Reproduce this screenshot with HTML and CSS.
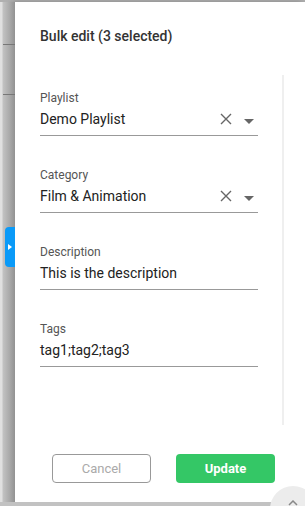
FILE: index.html
```html
<!DOCTYPE html>
<html lang="en">
<head>
    <meta charset="UTF-8">
    <meta name="viewport" content="width=device-width, initial-scale=1.0">
    <title>Bulk edit</title>
    <link rel="stylesheet" href="styles.css">
</head>
<body>
    <div class="screen">
        <div class="page">
            <div class="backdrop">
                <div class="row-line"></div>
                <div class="row-line"></div>
                <div class="side-tab"></div>
            </div>

            <div class="panel">
                <div class="panel-header">
                    <h2>Bulk edit (3 selected)</h2>
                </div>

                <div class="panel-body">
                    <div class="field">
                        <label>Playlist</label>
                        <div class="field-input">
                            <span class="value">Demo Playlist</span>
                            <svg class="clear" width="12" height="12" viewBox="0 0 12 12"><path d="M1 1L11 11M11 1L1 11" stroke="#666" stroke-width="1.4" fill="none"/></svg>
                            <svg class="caret" width="10" height="5" viewBox="0 0 10 5"><path d="M0 0H10L5 5Z" fill="#666"/></svg>
                        </div>
                    </div>
                    <div class="field">
                        <label>Category</label>
                        <div class="field-input">
                            <span class="value">Film &amp; Animation</span>
                            <svg class="clear" width="12" height="12" viewBox="0 0 12 12"><path d="M1 1L11 11M11 1L1 11" stroke="#666" stroke-width="1.4" fill="none"/></svg>
                            <svg class="caret" width="10" height="5" viewBox="0 0 10 5"><path d="M0 0H10L5 5Z" fill="#666"/></svg>
                        </div>
                    </div>
                    <div class="field">
                        <label>Description</label>
                        <div class="field-input">
                            <span class="value">This is the description</span>
                        </div>
                    </div>
                    <div class="field">
                        <label>Tags</label>
                        <div class="field-input">
                            <span class="value">tag1;tag2;tag3</span>
                        </div>
                    </div>
                </div>

                <div class="panel-footer">
                    <button class="btn btn-cancel">Cancel</button>
                    <button class="btn btn-update">Update</button>
                </div>
            </div>
        </div>
        <div class="bottom-bar"></div>
        <div class="scroll-top">
            <svg width="10" height="6" viewBox="0 0 10 6"><path d="M1 5L5 1L9 5" stroke="#888" stroke-width="1.5" fill="none"/></svg>
        </div>
    </div>
</body>
</html>
```

FILE: styles.css
```css
body {
    margin: 0;
    font-family: Roboto, "Liberation Sans", sans-serif;
    color: #222;
}

.screen {
    position: relative;
    height: 506px;
    padding-top: 2px;
    box-sizing: border-box;
    background-color: #b0b0b0;
    overflow: hidden;
}

.page {
    display: flex;
    height: 500px;
}

/* grey overlay strip left of the dialog */
.backdrop {
    width: 15px;
    flex-shrink: 0;
    position: relative;
    background: linear-gradient(to right, #e0e0e0 0, #e0e0e0 2px, #c2c2c2 3px, #acacac 9px, #929292 15px);
    padding-top: 42px;
}

.row-line {
    height: 1px;
    margin-left: 3px;
    margin-bottom: 49px;
    background-color: #777;
}

.side-tab {
    position: absolute;
    left: 5px;
    top: 225px;
    width: 10px;
    height: 40px;
    background-color: #0a9af8;
    border-radius: 4px 0 0 4px;
}

.side-tab::after {
    content: '';
    position: absolute;
    left: 3px;
    top: 17px;
    border-left: 4px solid #fff;
    border-top: 3px solid transparent;
    border-bottom: 3px solid transparent;
}

.panel {
    flex: 1;
    background-color: #fff;
    display: flex;
    flex-direction: column;
    box-shadow: -3px 0 6px rgba(0, 0, 0, 0.25);
}

.panel-header {
    height: 73px;
    padding: 24px 25px 0;
    box-sizing: border-box;
}

.panel-header h2 {
    margin: 0;
    font-size: 14px;
    line-height: 20px;
    font-weight: 500;
    color: #333;
}

.panel-body {
    height: 350px;
    margin-left: 25px;
    margin-right: 21px;
    padding: 16px 24px 0 0;
    box-sizing: border-box;
    border-right: 2px solid #efefef;
}

.field {
    margin-bottom: 32px;
}

.field label {
    display: block;
    font-size: 12px;
    line-height: 14px;
    color: #555;
    margin-bottom: 4px;
}

.field-input {
    display: flex;
    align-items: center;
    padding-bottom: 6px;
    border-bottom: 1px solid #999;
}

.value {
    flex: 1;
    font-size: 14px;
    line-height: 20px;
    color: #222;
}

.clear {
    margin-right: 12px;
}

.caret {
    margin-right: 4px;
    margin-top: 4px;
}

.panel-footer {
    display: flex;
    gap: 25px;
    padding: 29px 0 0 37px;
}

.btn {
    width: 99px;
    height: 29px;
    border-radius: 4px;
    font-family: Roboto, "Liberation Sans", sans-serif;
    font-size: 13px;
    cursor: pointer;
}

.btn-cancel {
    background-color: #fff;
    border: 1px solid #999;
    color: #aaa;
}

.btn-update {
    background-color: #34c766;
    border: none;
    color: #fff;
    font-weight: 700;
}

.bottom-bar {
    height: 4px;
    background-color: #c2c2c2;
    position: relative;
    z-index: 2;
}

.scroll-top {
    position: absolute;
    left: 270px;
    top: 486px;
    width: 46px;
    height: 46px;
    border-radius: 50%;
    background-color: #ececec;
    display: flex;
    justify-content: center;
    padding-top: 14px;
    box-sizing: border-box;
    z-index: 3;
}
```
